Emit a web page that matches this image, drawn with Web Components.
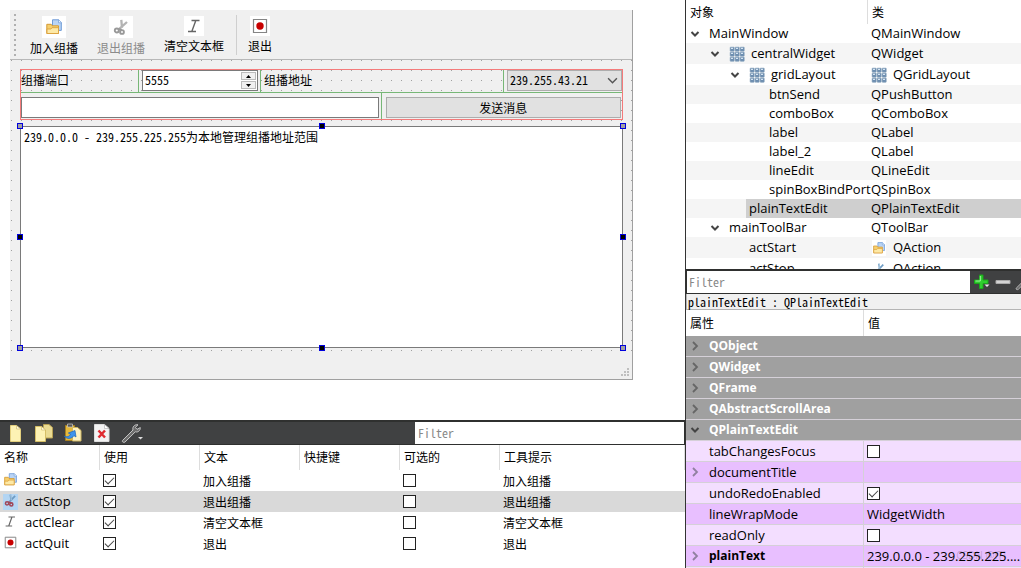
<!DOCTYPE html>
<html lang="zh-CN">
<head>
<meta charset="utf-8">
<title>Designer</title>
<style>
html,body{margin:0;height:100%;overflow:hidden;background:#fff}
body{font:13px/19px "Open Sans","Noto Sans CJK SC",sans-serif;color:#000;--cjk:"Noto Sans CJK SC",sans-serif;--mono:"Noto Sans Mono CJK SC","Liberation Mono",monospace}
</style>
</head>
<body>
<designer-app></designer-app>
<script>
const define=(name,html)=>customElements.define(name,class extends HTMLElement{
  connectedCallback(){
    if(this.shadowRoot)return;
    const t=document.createElement('template');
    t.innerHTML=typeof html==='function'?html(this):html;
    this.attachShadow({mode:'open'}).append(t.content.cloneNode(true));
  }
});

const ICONS={
folder:`<svg viewBox="0 0 16 16"><path d="M6.500.8h6.200l2.600 2.600v8H6.500z" fill="#b9d4f5" stroke="#6f9bd6"/><path d="M12.500.8v3h3" fill="#eaf3ff" stroke="#6f9bd6" stroke-width=".7"/><path d="M.8 14.500V5.300h4.400l1 1.500h6.300v7.700z" fill="#f6cf6d" stroke="#d49a35"/><path d="M1 14.500v-4.500h4l1-1.300h6.500v5.800z" fill="#fde9a6" stroke="#dba03c" stroke-width=".9"/></svg>`,
cut:`<svg viewBox="0 0 16 16"><path d="M7.800.8l1.200 8M13.700 2.200L6 10.200" stroke="#6e9cc4" stroke-width="2.200" fill="none"/><path d="M8.300 1l.8 7" stroke="#c9dff0" stroke-width=".8"/><circle cx="3.800" cy="11.500" r="2" fill="none" stroke="#a04658" stroke-width="1.900"/><circle cx="9" cy="12.800" r="1.900" fill="none" stroke="#a04658" stroke-width="1.900"/><path d="M5.300 10l3.500.8" stroke="#a04658" stroke-width="1.800"/></svg>`,
cutoff:`<svg viewBox="0 0 16 16"><path d="M8.300.8l.7 8M14 3L6 10.200" stroke="#b4b4b4" stroke-width="2.300" fill="none"/><circle cx="3.800" cy="11.500" r="2" fill="none" stroke="#999" stroke-width="1.900"/><circle cx="9" cy="13" r="1.900" fill="none" stroke="#999" stroke-width="1.900"/><path d="M5.300 10l3.500.8" stroke="#999" stroke-width="1.800"/></svg>`,
italic:`<svg viewBox="0 0 16 16"><path d="M5.500 2.500h8M2 13.500h8M9.800 2.500L5.800 13.500" stroke="#666" stroke-width="1.400" fill="none"/></svg>`,
record:`<svg viewBox="0 0 16 16"><path d="M1.500 1.500h13v13h-13z" fill="#fff" stroke="#858585" stroke-width="1.200"/><circle cx="8" cy="8" r="3.700" fill="#c80000"/></svg>`,
grid:`<svg viewBox="0 0 16 16"><g fill="#6d8eb0" stroke="#a9bccd" stroke-width=".6"><rect x="1" y="1" width="4.400" height="4.400" rx=".8"/><rect x="6" y="1" width="4.400" height="4.400" rx=".8"/><rect x="11" y="1" width="4.400" height="4.400" rx=".8"/><rect x="1" y="6" width="4.400" height="4.400" rx=".8"/><rect x="6" y="6" width="4.400" height="4.400" rx=".8"/><rect x="11" y="6" width="4.400" height="4.400" rx=".8"/><rect x="1" y="11" width="4.400" height="4.400" rx=".8"/><rect x="6" y="11" width="4.400" height="4.400" rx=".8"/><rect x="11" y="11" width="4.400" height="4.400" rx=".8"/></g><path d="M2 2.300h2M7 2.300h2M12 2.300h2M2 7.300h2M7 7.300h2M12 7.300h2M2 12.300h2M7 12.300h2M12 12.300h2" stroke="#d6e5f3" stroke-width="1.200"/></svg>`,
page:`<svg viewBox="0 0 20 20"><path d="M5.500 2.500h6l4 3.500v12.500h-10z" fill="#fdf2b4" stroke="#e3cf7e"/><path d="M11.500 2.500V6h4z" fill="#fffbe2" stroke="#c9b468" stroke-width=".6"/></svg>`,
copy:`<svg viewBox="0 0 20 20"><path d="M9.500 1.500h5.500l3.500 3v10.500h-9z" fill="#eadb93" stroke="#b8a153"/><path d="M1.500 3.500h6l4 3.500v11.500h-10z" fill="#fdf2b4" stroke="#d6bf66"/><path d="M7.500 3.500V7h4z" fill="#fffbe2" stroke="#c9b468" stroke-width=".6"/></svg>`,
paste:`<svg viewBox="0 0 20 20"><path d="M2.500 2.500h9v15h-9z" fill="#e5b93c" stroke="#a88020"/><path d="M4.500 1h5v3h-5z" fill="#555" stroke="#ccc" stroke-width=".7"/><path d="M9.500 4.500h5l3.500 3v10.500h-8.500z" fill="#fdf2c4" stroke="#d0b860"/><path d="M1 13c3 1.500 5.500.5 6.500-1.800L5.300 10 12 7.500l1 6.500-2-1.300C8.500 16 4 16.500 1 13z" fill="#3d93ed" stroke="#1c64b8" stroke-width=".7"/></svg>`,
remove:`<svg viewBox="0 0 20 20"><path d="M2.500 1.500h10l4.500 4v13h-14.500z" fill="#f3f3f3" stroke="#ddd"/><path d="M12.500 1.500v4H17z" fill="#fff" stroke="#aaa" stroke-width=".6"/><path d="M6.500 7.500l6.500 7M13 7.500l-6.500 7" stroke="#df2b31" stroke-width="2.500"/></svg>`,
wrench:`<svg viewBox="0 0 22 20"><path d="M1.500 17.500L12 7c-.8-3 1.300-5.800 5-5.200l-2.600 2.600 1.600 2 3.300-1.800c.2 3.200-2.500 5-5 4.200L4 19c-1.500 1-3.300-.3-2.500-1.500z" fill="#6d6d6d" stroke="#c4c4c4"/><path d="M17 14h5l-2.500 2.500z" fill="#ddd"/></svg>`,
plus:`<svg viewBox="0 0 18 18"><path d="M6.500 2h3.500v5h5v3.500h-5V15.500H6.500v-5h-5V7h5z" fill="#2fce2f" stroke="#1aa61a"/><path d="M7.300 3v5H2.500" stroke="#a5f3a0" fill="none"/><path d="M11.500 11.500h5l-2.500 2.500z" fill="#eee"/></svg>`,
minus:`<svg viewBox="0 0 18 18"><path d="M2 7.500h14v3H2z" fill="#d4d4d4" stroke="#aaa"/></svg>`,
down:`<svg viewBox="0 0 10 10"><path d="M1.500 3L5 6.500 8.500 3" stroke="#444" stroke-width="2" fill="none"/></svg>`,
right:`<svg viewBox="0 0 10 10"><path d="M3 1L7 5 3 9" stroke="currentColor" stroke-width="1.800" fill="none"/></svg>`,
thin:`<svg viewBox="0 0 10 10"><path d="M1 3l4 4 4-4" stroke="#555" stroke-width="1.300" fill="none"/></svg>`
};
define('glyph-icon',el=>`<style>:host{display:inline-block;width:16px;height:16px;flex:none;vertical-align:middle}svg{display:block;width:100%;height:100%}</style>${ICONS[el.getAttribute('name')]}`);

define('check-mark',el=>`<style>:host{display:block;height:13px;width:13px}
input{appearance:none;display:block;box-sizing:border-box;margin:0;width:13px;height:13px;border:1px solid #222;background:#fff}
input:checked::after{content:"";display:block;width:8px;height:4px;border:solid #444;border-width:0 0 1px 1px;transform:translate(1px,2px) rotate(-45deg)}</style>
<input type="checkbox" aria-label="${el.getAttribute('label')}" ${el.hasAttribute('on')?'checked':''}>`);

define('tool-action',el=>`<style>:host{display:block}
button{display:flex;flex-direction:column;align-items:center;gap:1px;border:0;padding:0;background:none;font:12px/18px var(--cjk);color:#000}
button:disabled{color:#8b8b8b}
.i{background:#fff;padding:3px 4px;display:flex}.i.s{padding:2px}</style>
<button ${el.hasAttribute('off')?'disabled':''}><span class="i ${el.hasAttribute('small')?'s':''}"><glyph-icon name="${el.getAttribute('icon')}"></glyph-icon></span><slot></slot></button>`);

define('form-preview',`<style>
:host{display:block;margin:10px 52px 40px 10px;background:#f0f0f0;border:solid #a0a0a0;border-width:0 1px 1px 0;font:12px/18px var(--mono)}
*{box-sizing:border-box}
.bar{display:flex;height:50px;padding:6px 4px 0;border-bottom:1px solid #b8b8b8}
.grip{width:2px;height:42px;margin:-2px 14px 0 0;background:repeating-linear-gradient(#b0b0b0 0 2px,transparent 2px 5px)}
.sep{width:1px;height:40px;margin:-1px 11px 0 12px;background:#cfcfcf}
tool-action{margin-right:19px}tool-action.n{margin-right:0}
.center{padding:9px 9px 3px 10px;background:conic-gradient(at 1px 1px,transparent 75%,#a0a0a0 0) 1px 0/10px 10px}
.grid{border:1px solid #f47a7a}
.row{display:flex;height:23px;border-bottom:1px solid #77b777}
.row>*{border-right:1px solid #77b777}
.row>:last-child{border-right:0}
.l1{width:118px}.l2{flex:1;padding-left:3px}
label{line-height:20px}
.spin{width:122px;padding:0 2px 0 3px}
.box{display:flex;height:21px;border:1px solid #7a7a7a;background:#fff;padding:1px}
input{border:0;outline:0;padding:0 1px 2px;margin:0;min-width:0;flex:1;font:inherit;background:#fff}
.steps{width:15px;display:grid;grid-template-rows:1fr 1fr;gap:1px}
.steps button{padding:0;border:1px solid #bbb;background:#f0f0f0;display:grid;place-items:center}
.steps svg{width:5px;height:3px}
.combo{width:118px;padding-left:3px;position:relative}
select{appearance:none;display:block;width:100%;height:21px;border:1px solid #adadad;background:#e1e1e1;padding:0 2px 2px;font:inherit;color:#000;border-radius:0}
.combo glyph-icon{position:absolute;right:4px;top:5px;width:11px;height:11px}
.row2{display:flex;height:26px}
.e{width:60%;border-right:1px solid #77b777;padding:4px 2px 0 0}
.b{flex:1;padding:4px 1px 0 4px}
.line{height:21px;width:100%;border:1px solid #7a7a7a;display:block}
.send{width:100%;height:21px;border:1px solid #adadad;background:#e1e1e1;font:inherit;padding:0;display:block}
.edit{position:relative;margin-top:6px}
textarea{display:block;width:100%;height:222px;border:1px solid #7a7a7a;border-radius:0;resize:none;outline:0;padding:1px 3px;margin:0;font:inherit;background:#fff;color:#000}
.edit i{position:absolute;width:6px;height:6px;background:#000;border:1px solid #00d;margin:-3px}
.edit i.c{background:#a0a0a0}
.status{height:28px;display:flex;justify-content:flex-end;align-items:flex-end;padding:2px}
.status svg{width:9px;height:9px}
</style>
<div class="bar"><span class="grip"></span>
<tool-action icon="folder">加入组播</tool-action><tool-action icon="cutoff" off>退出组播</tool-action><tool-action icon="italic" small class="n">清空文本框</tool-action><span class="sep"></span><tool-action icon="record" small>退出</tool-action></div>
<div class="center">
<div class="grid"><div class="row"><label class="l1" for="port">组播端口</label>
<div class="spin"><div class="box"><input id="port" value="5555"><div class="steps"><button aria-label="增加"><svg viewBox="0 0 5 3"><path d="M0 3L2.500 0 5 3z"/></svg></button><button aria-label="减少"><svg viewBox="0 0 5 3"><path d="M0 0l2.500 3L5 0z"/></svg></button></div></div></div>
<label class="l2" for="addr">组播地址</label><div class="combo"><select id="addr"><option>239.255.43.21</option></select><glyph-icon name="thin"></glyph-icon></div></div>
<div class="row2"><div class="e"><input class="line" aria-label="消息"></div><div class="b"><button class="send">发送消息</button></div></div></div>
<div class="edit"><textarea aria-label="plainTextEdit" spellcheck="false">239.0.0.0 - 239.255.225.255为本地管理组播地址范围</textarea>
<i class="c" style="left:0;top:0"></i><i style="left:50%;top:0"></i><i class="c" style="left:100%;top:0"></i><i style="left:0;top:50%"></i><i style="left:100%;top:50%"></i><i class="c" style="left:0;top:100%"></i><i style="left:50%;top:100%"></i><i class="c" style="left:100%;top:100%"></i></div></div>
<div class="status"><svg viewBox="0 0 9 9" fill="#bfbfbf"><path d="M6 0h2v2H6zM3 3h2v2H3zM6 3h2v2H6zM0 6h2v2H0zM3 6h2v2H3zM6 6h2v2H6z"/></svg></div>`);

const ACTIONS=[['folder','actStart','加入组播'],['cut','actStop','退出组播'],['italic','actClear','清空文本框'],['record','actQuit','退出']];
define('action-editor',()=>`<style>
:host{display:block;min-height:149px}
*{box-sizing:border-box}
.bar{display:flex;height:25px;background:#404142;border:solid #2f302f;border-width:2px 1px 1px 0;padding-left:5px;align-items:center}
.bar button{border:0;background:none;padding:0;margin-right:9px;display:flex}
.bar glyph-icon{width:20px;height:20px}.bar .w glyph-icon{width:22px}
.bar input{margin-left:auto;width:269px;height:22px;border:0;padding:0 3px 2px;font:12px/18px var(--mono);outline:0}
input::placeholder{color:#888}
table{width:100%;table-layout:fixed;border-collapse:separate;border-spacing:0;font-size:13px;line-height:19px}
th{height:25px;padding:0 4px 1px;text-align:left;font:12px/18px var(--cjk);border-right:1px solid #ddd}
td{height:21px;padding:0 3px}
th:not(:last-child){width:100px}
tbody tr:nth-child(2){background:#d9d9d9}
td.c{font:12px/18px var(--cjk)}
.n{display:flex;align-items:center;gap:7px}.n glyph-icon{width:13px;height:13px}
.n span{padding:0 1px 3px;display:flex}tr:nth-child(2) .n span{background:#b3d5f3}
</style>
<div class="bar"><button aria-label="新建"><glyph-icon name="page"></glyph-icon></button><button aria-label="复制"><glyph-icon name="copy"></glyph-icon></button><button aria-label="粘贴"><glyph-icon name="paste"></glyph-icon></button><button aria-label="删除"><glyph-icon name="remove"></glyph-icon></button><button class="w" aria-label="配置"><glyph-icon name="wrench"></glyph-icon></button><input placeholder="Filter" aria-label="Filter"></div>
<table><thead><tr>${['名称','使用','文本','快捷键','可选的','工具提示'].map(x=>`<th>${x}</th>`).join('')}</tr></thead>
<tbody>${ACTIONS.map(([i,n,t])=>`<tr><td><div class="n"><span><glyph-icon name="${i}"></glyph-icon></span>${n}</div></td><td><check-mark on label="${n} 使用"></check-mark></td><td class="c">${t}</td><td></td><td><check-mark label="${n} 可选的"></check-mark></td><td class="c">${t}</td></tr>`).join('')}</tbody></table>`);

const TREE=[[0,1,'','MainWindow','','QMainWindow'],[1,1,'grid','centralWidget','','QWidget'],[2,1,'grid','gridLayout','grid','QGridLayout'],[3,0,'','btnSend','','QPushButton'],[3,0,'','comboBox','','QComboBox'],[3,0,'','label','','QLabel'],[3,0,'','label_2','','QLabel'],[3,0,'','lineEdit','','QLineEdit'],[3,0,'','spinBoxBindPort','','QSpinBox'],[2,0,'','plainTextEdit','','QPlainTextEdit'],[1,1,'','mainToolBar','','QToolBar'],[2,0,'','actStart','folder','QAction'],[2,0,'','actStop','cut','QAction']];
define('object-tree',()=>`<style>
:host{display:block;overflow:hidden}
table{width:100%;table-layout:fixed;border-collapse:separate;border-spacing:0;font-size:13px;line-height:19px;white-space:nowrap}
th{height:24px;padding:0 4px;text-align:left;font:12px/18px var(--cjk)}
th:first-child{width:173px;border-right:1px solid #ddd}
td{height:19px;padding:0}td+td{padding-left:3px}
.tall td{height:21px}
tr:nth-child(even){background:#f5f5f5}
.n{display:flex;align-items:center;padding-left:calc(var(--d)*20px + 4px)}
.n>b{width:10px;height:10px;margin-right:9px;display:flex;flex:none}.n>b glyph-icon{width:10px;height:10px}
.n>glyph-icon,.v>glyph-icon{margin-right:6px}
.v>glyph-icon.a{box-sizing:border-box;width:14px;height:16px;padding:1px;margin:0 7px 0 1px;background:#fff}
.v{display:flex;align-items:center}
tr.sel td+td{background:#cfcfcf}
tr.sel .n{background:linear-gradient(#cfcfcf,#cfcfcf) 60px 0 no-repeat}
</style><table><thead><tr><th>对象</th><th>类</th></tr></thead><tbody>
${TREE.map(([d,o,i,n,j,c])=>`<tr class="${i||j?'tall':''} ${n==='plainTextEdit'?'sel':''}"><td><div class="n" style="--d:${d}"><b>${o?'<glyph-icon name="down"></glyph-icon>':''}</b>${i?`<glyph-icon name="${i}"></glyph-icon>`:''}${n}</div></td><td><div class="v">${j?`<glyph-icon name="${j}" class="${j==='grid'?'':'a'}"></glyph-icon>`:''}${c}</div></td></tr>`).join('')}</tbody></table>`);

const PROPS=[['tabChangesFocus','','off'],['documentTitle','right',''],['undoRedoEnabled','','on'],['lineWrapMode','','WidgetWidth'],['readOnly','','off'],['plainText','right','239.0.0.0 - 239.255.225....'],['','','']];
define('property-editor',()=>`<style>
:host{display:block;position:relative;height:299px;overflow:hidden}
*{box-sizing:border-box}
.bar{display:flex;height:25px;background:#404142;border:solid #2f302f;border-width:2px 0 1px 1px;align-items:center;overflow:hidden}
.bar input{flex:1;min-width:0;height:22px;border:0;padding:0 2px 2px;font:12px/18px var(--mono);outline:0}
input::placeholder{color:#888}
.bar button{border:0;background:none;padding:0;margin-left:3px;display:flex}.bar glyph-icon{width:18px;height:18px}
.bar .w{width:6px;overflow:hidden}
.obj{height:16px;border:1px solid #b4b4b4;border-width:0 0 1px 1px;background:#f0f0f0;font:12px/15px var(--mono);padding:0 1px;white-space:pre}
table{width:100%;table-layout:fixed;border-collapse:separate;border-spacing:0;font-size:13px;line-height:18px;white-space:nowrap}
thead th{height:26px;padding:0 4px;text-align:left;font:12px/18px var(--cjk)}
th.k{width:178px;border-right:1px solid #ddd}
tbody th,td{height:21px;padding:0 3px;border-bottom:1px solid #d5d0d8;text-align:left;font-weight:400}
tbody th:first-child{padding-left:4px}
tbody tr>th:not([colspan]){border-right:1px solid #d5d0d8}
.g th{background:#a0a0a0;color:#fff;font-weight:700;font-size:12px}
.a{background:#f3deff}.d{background:#e8bfff}
.n{display:flex;align-items:center}.n>i{width:10px;height:10px;margin-right:9px;display:flex;color:#666}.n glyph-icon{width:10px;height:10px}
.d .n>i{color:#9080a0}
.bold{font-weight:700;font-size:12px}
.mark{position:absolute;right:15px;bottom:6px;font-size:10px;line-height:14px;color:#0003}
</style>
<div class="bar"><input placeholder="Filter" aria-label="Filter"><button aria-label="添加"><glyph-icon name="plus"></glyph-icon></button><button aria-label="移除"><glyph-icon name="minus"></glyph-icon></button><button class="w" aria-label="配置"><glyph-icon name="wrench"></glyph-icon></button></div>
<div class="obj">plainTextEdit : QPlainTextEdit</div>
<table><thead><tr><th class="k">属性</th><th>值</th></tr></thead><tbody>
${['QObject','QWidget','QFrame','QAbstractScrollArea','QPlainTextEdit'].map((x,i)=>`<tr class="g"><th colspan="2"><div class="n"><i><glyph-icon name="${i===4?'down':'right'}"></glyph-icon></i>${x}</div></th></tr>`).join('')}
${PROPS.map(([n,e,v],i)=>`<tr class="${i%2?'d':'a'}"><th><div class="n ${n==='plainText'?'bold':''}"><i>${e?'<glyph-icon name="right"></glyph-icon>':''}</i>${n}</div></th><td>${v==='on'||v==='off'?`<check-mark label="${n}" ${v==='on'?'on':''}></check-mark>`:v}</td></tr>`).join('')}
</tbody></table><span class="mark">CSDN @IT]</span>`);

define('designer-app',`<style>
:host{display:grid;grid-template-columns:minmax(0,1fr) 336px;height:100vh;overflow:hidden}
main,aside{display:flex;flex-direction:column;min-height:0}
.canvas{flex:1}
aside{border-left:1px solid #333}
object-tree{flex:1;min-height:0}
</style><main><div class="canvas"><form-preview></form-preview></div><action-editor></action-editor></main>
<aside><object-tree></object-tree><property-editor></property-editor></aside>`);
</script>
</body>
</html>
